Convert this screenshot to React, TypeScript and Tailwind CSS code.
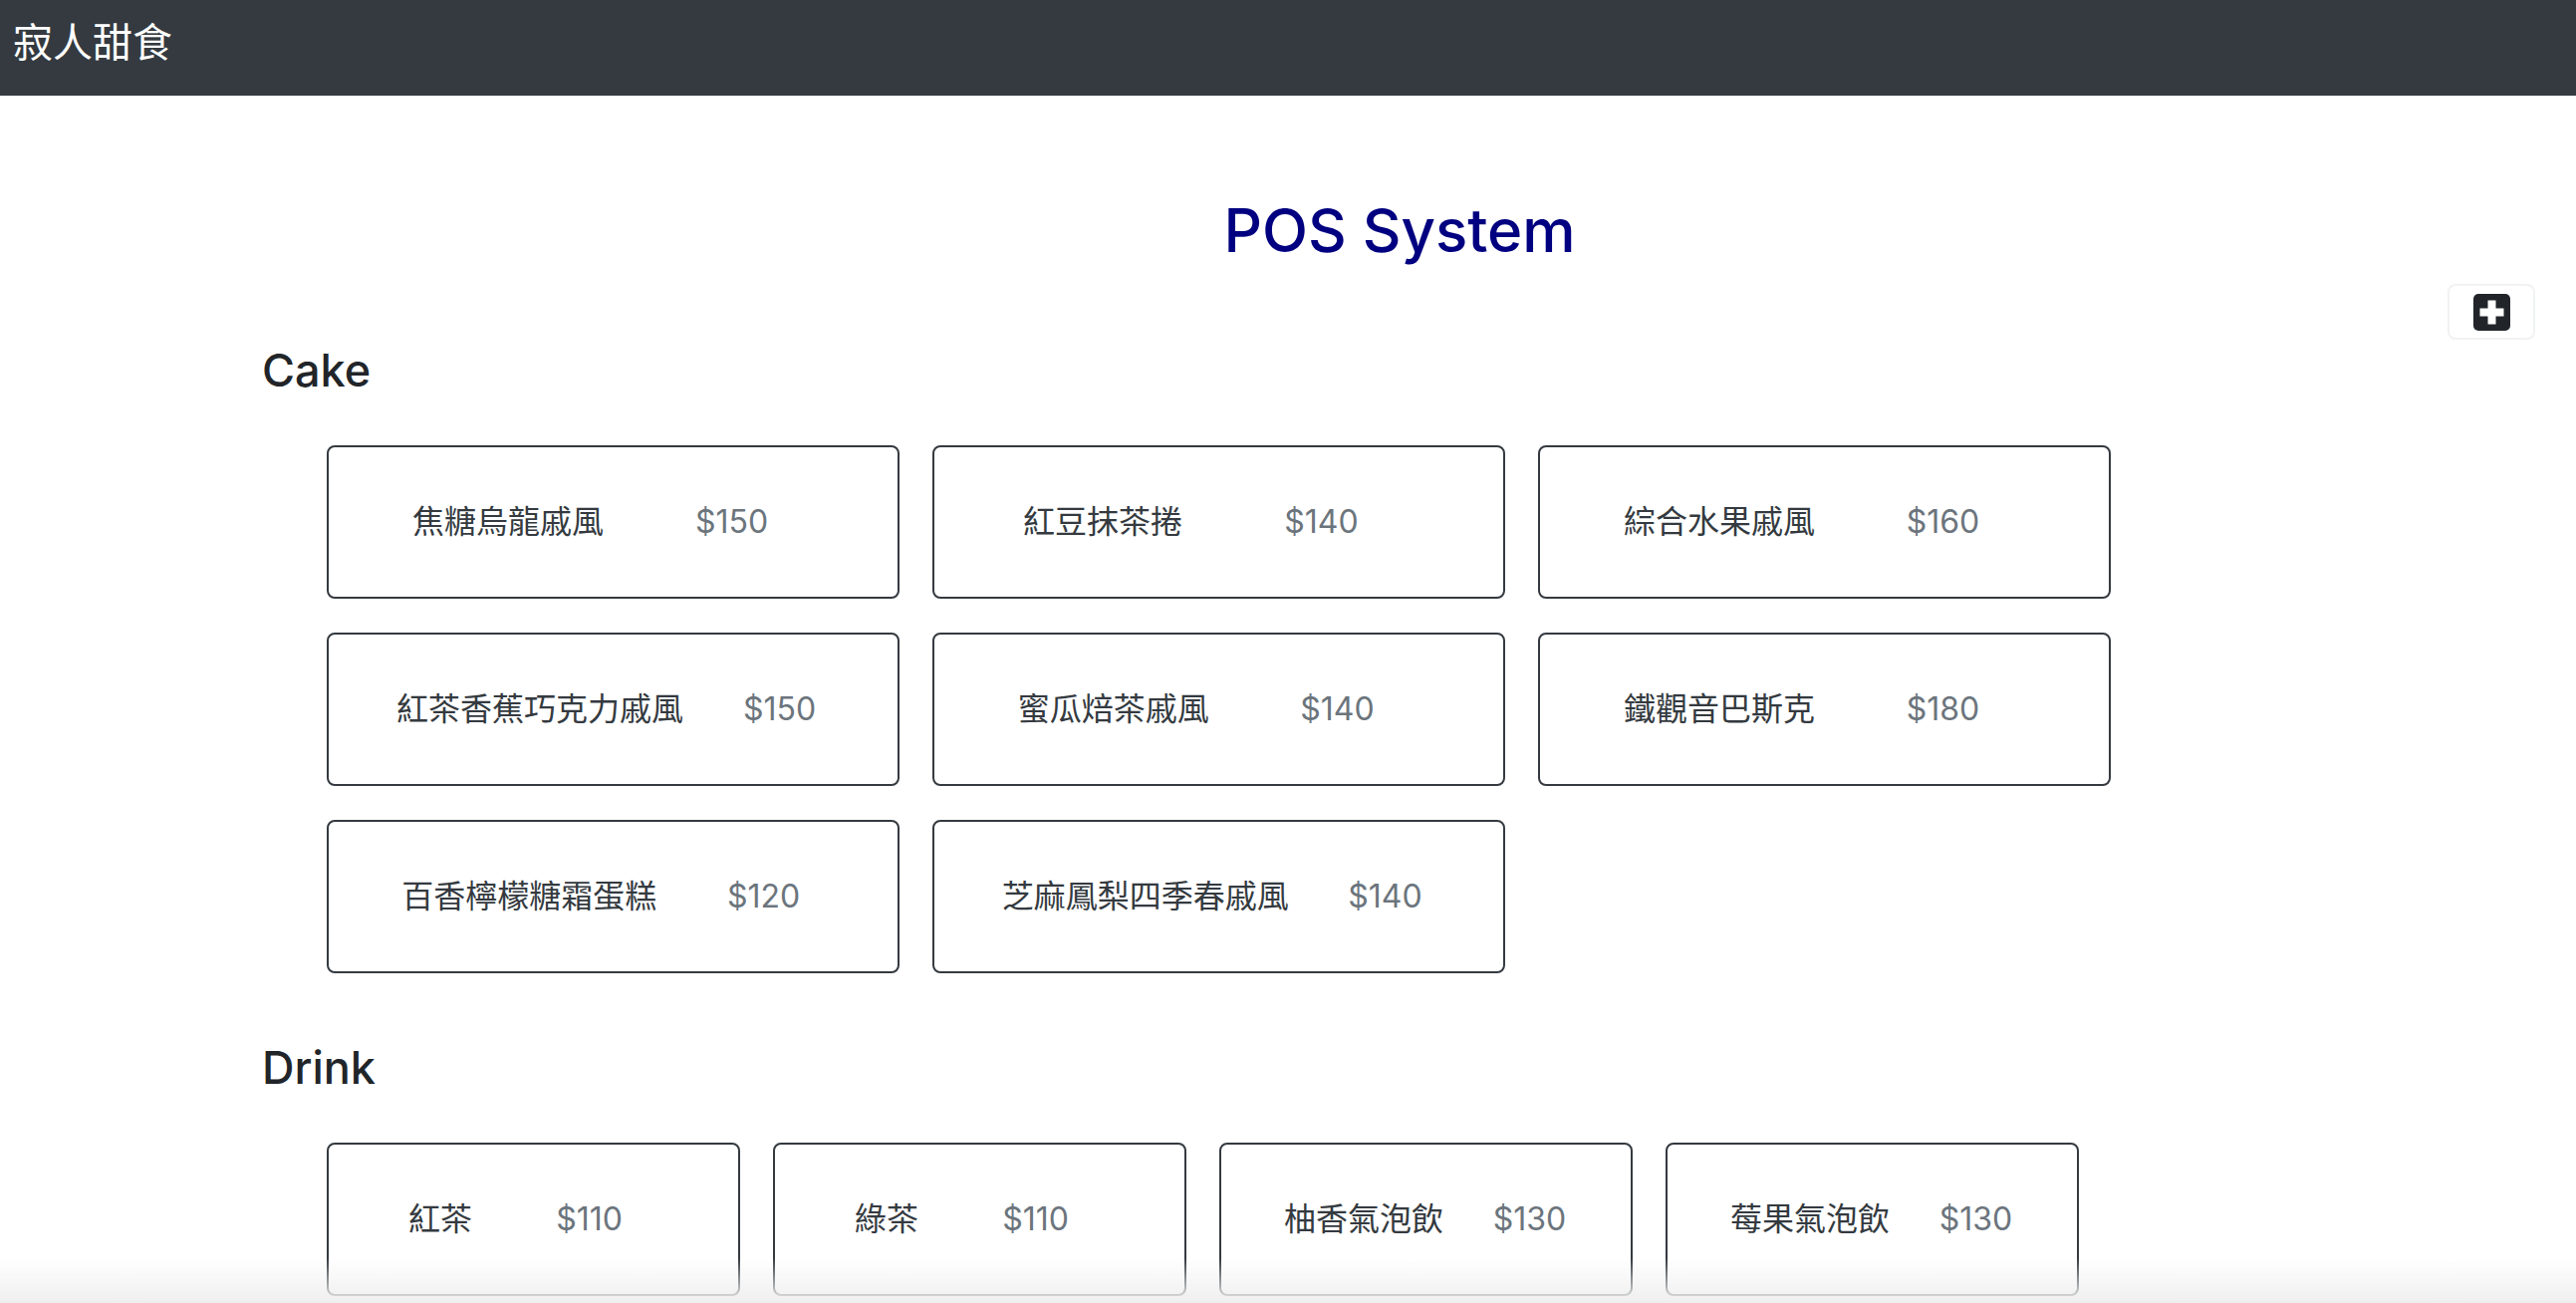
import React from "react";

interface Item {
  name: string;
  price: number;
}

const cakes: Item[] = [
  { name: "焦糖烏龍戚風", price: 150 },
  { name: "紅豆抹茶捲", price: 140 },
  { name: "綜合水果戚風", price: 160 },
  { name: "紅茶香蕉巧克力戚風", price: 150 },
  { name: "蜜瓜焙茶戚風", price: 140 },
  { name: "鐵觀音巴斯克", price: 180 },
  { name: "百香檸檬糖霜蛋糕", price: 120 },
  { name: "芝麻鳳梨四季春戚風", price: 140 },
];

const drinks: Item[] = [
  { name: "紅茶", price: 110 },
  { name: "綠茶", price: 110 },
  { name: "柚香氣泡飲", price: 130 },
  { name: "莓果氣泡飲", price: 130 },
];

function PlusSquare() {
  return (
    <svg width="37" height="37" viewBox="0 0 37 37">
      <rect x="0" y="0" width="37" height="37" rx="5" fill="#212529" />
      <rect x="6.5" y="14.5" width="24" height="8" fill="#fff" />
      <rect x="14.5" y="6.5" width="8" height="24" fill="#fff" />
    </svg>
  );
}

function ItemCard({ item, rowClass }: { item: Item; rowClass: string }) {
  return (
    <button className="h-[154px] rounded-[8px] border-2 border-[#343a40] bg-white text-left overflow-visible">
      {/* empty third slot keeps the spacing of the original layout */}
      <div className={rowClass}>
        <span className="text-[#343a40] whitespace-nowrap">{item.name}</span>
        <span className="text-[#6c757d] whitespace-nowrap">${item.price}</span>
        <span />
      </div>
    </button>
  );
}

function Section({
  title,
  items,
  gridClass,
  rowClass,
}: {
  title: string;
  items: Item[];
  gridClass: string;
  rowClass: string;
}) {
  return (
    <section className="pl-[263px]">
      <h4 className="text-[45px] leading-[54px] font-medium text-[#212529]">
        {title}
      </h4>
      <div className={gridClass}>
        {items.map((item, index) => (
          <ItemCard key={index} item={item} rowClass={rowClass} />
        ))}
      </div>
    </section>
  );
}

export default function App() {
  return (
    <div className="min-h-[1308px] bg-white font-['Inter','Noto_Sans_CJK_TC',sans-serif]">
      <nav className="h-[96px] bg-[#343a40] flex items-start">
        <span className="ml-[13px] mt-[16px] text-[40px] leading-[48px] text-white font-['Noto_Sans_CJK_TC',sans-serif]">
          寂人甜食
        </span>
      </nav>

      <h1 className="mt-[99px] pl-[224px] text-center text-[60px] leading-[72px] font-medium text-[#000080]">
        POS System
      </h1>

      <div className="mt-[18px] pr-[41px] flex justify-end">
        <button className="w-[88px] h-[56px] rounded-[8px] border-2 border-[#f1f2f3] flex items-center justify-center">
          <PlusSquare />
        </button>
      </div>

      <div className="mt-[4px]">
        <Section
          title="Cake"
          items={cakes}
          gridClass="mt-[48px] ml-[65px] grid grid-cols-[repeat(3,575px)] gap-x-[33px] gap-y-[34px]"
          rowClass="ml-[38px] w-[541px] h-full flex items-center justify-around text-[32px] leading-[48px]"
        />
      </div>

      <div className="mt-[68px]">
        <Section
          title="Drink"
          items={drinks}
          gridClass="mt-[48px] ml-[65px] grid grid-cols-[repeat(4,415px)] gap-x-[33px] gap-y-[34px]"
          rowClass="ml-[38px] w-[383px] h-full flex items-center justify-around text-[32px] leading-[48px]"
        />
      </div>

      <div className="pointer-events-none fixed inset-x-0 bottom-0 h-[45px] bg-linear-to-b from-white/0 to-[#efefef]" />
    </div>
  );
}
